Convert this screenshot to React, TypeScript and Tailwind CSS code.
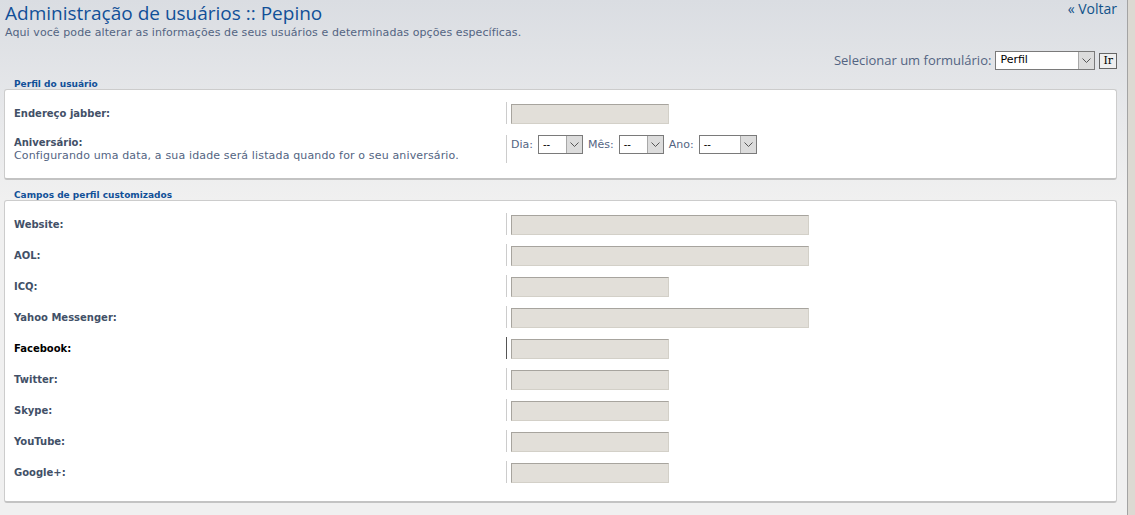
import React from "react";

const Chevron = () => (
  <svg width="9" height="6" viewBox="0 0 9 6" className="block">
    <path d="M0.5 0.5 L4.5 4.5 L8.5 0.5" fill="none" stroke="#555" strokeWidth="1" />
  </svg>
);

function FakeSelect({ width, value, text = "text-[10px]" }: { width: number; value: string; text?: string }) {
  return (
    <div
      className="flex h-[19px] border border-[#7a7a7a] bg-white box-border shrink-0"
      style={{ width }}
    >
      <div className={`flex-1 flex items-center pl-[4px] ${text} text-black`}>{value}</div>
      <div className="w-[16px] bg-[#dcdcdc] border-l border-[#a8a8a8] flex items-center justify-center">
        <Chevron />
      </div>
    </div>
  );
}

function Input({ long }: { long?: boolean }) {
  return (
    <div
      className={`h-[20px] bg-[#e2dfd9] border-t border-l border-[#a7a49e] border-b border-r border-b-[#d3d0c8] border-r-[#d3d0c8] ${
        long ? "w-[298px]" : "w-[158px]"
      }`}
    />
  );
}

function Row({ label, long, active }: { label: string; long?: boolean; active?: boolean }) {
  return (
    <div className="flex h-[22px]">
      <div className={`w-[501px] pl-[9px] flex items-center text-[10px] font-bold ${active ? "text-black" : "text-[#425067]"}`}>
        {label}
      </div>
      <div className={`border-l ${active ? "border-[#555]" : "border-[#cccccc]"} pl-[4px] pt-[2px]`}>
        <Input long={long} />
      </div>
    </div>
  );
}

function Legend({ children, mt }: { children: React.ReactNode; mt: string }) {
  return (
    <div className={`pl-[10px] h-[13px] pt-[3px] text-[9px] font-bold text-[#115098] leading-[10px] ${mt}`}>
      {children}
    </div>
  );
}

export default function App() {
  return (
    <div
      className="flex w-[1135px] h-[515px] overflow-hidden"
      style={{ fontFamily: '"DejaVu Sans", Verdana, sans-serif' }}
    >
      <div className="flex-1 bg-[linear-gradient(to_bottom,#dadde2_0px,#e8e9eb_120px,#f0f0f0_200px,#f0f0f0_100%)] pr-[10px]">
        <div className="flex justify-between">
          <div className="pl-[5px]">
            <h1
              className="text-[19px] leading-[24px] text-[#115098] mt-[1px]"
              style={{ fontFamily: '"Open Sans", "Trebuchet MS", sans-serif' }}
            >
              Administração de usuários :: Pepino
            </h1>
            <p className="text-[11px] leading-[14px] text-[#536482] mt-[1px] tracking-[0.09px]">
              Aqui você pode alterar as informações de seus usuários e determinadas opções específicas.
            </p>
          </div>
          <a
            className="text-[14px] leading-[18px] text-[#105289]"
            style={{ fontFamily: '"Open Sans", sans-serif' }}
          >
            « Voltar
          </a>
        </div>

        <div className="flex justify-end items-center mt-[11px] gap-[4px] h-[19px]">
          <span className="text-[13px] leading-[19px] text-[#536482]" style={{ fontFamily: '"Open Sans", sans-serif' }}>
            Selecionar um formulário:
          </span>
          <FakeSelect width={100} value="Perfil" text="text-[11px]" />
          <div
            className="h-[16px] px-[3px] border border-[#666] bg-[#efefef] text-[11px] leading-[14px] text-black"
            style={{ fontFamily: '"DejaVu Serif", serif' }}
          >
            Ir
          </div>
        </div>

        <div className="ml-[4px]">
          <Legend mt="mt-[6px]">Perfil do usuário</Legend>
          <div className="bg-white border border-[#cccccc] border-b-[#c3c3c3] border-b-2 rounded-[3px] pt-[12px] pb-[15px]">
            <div className="flex h-[22px]">
              <div className="w-[501px] pl-[9px] flex items-center text-[10px] font-bold text-[#425067]">
                Endereço jabber:
              </div>
              <div className="border-l border-[#cccccc] pl-[4px] pt-[2px]">
                <Input />
              </div>
            </div>
            <div className="flex h-[28px] mt-[11px]">
              <div className="w-[501px] pl-[9px] leading-[13px] pt-[1px]">
                <div className="text-[10px] font-bold text-[#425067]">Aniversário:</div>
                <div className="text-[11px] text-[#536482] tracking-[0.15px]">
                  Configurando uma data, a sua idade será listada quando for o seu aniversário.
                </div>
              </div>
              <div className="border-l border-[#cccccc] pl-[4px] flex items-start gap-[5px] text-[11px] text-[#536482]">
                <span className="leading-[19px]">Dia:</span>
                <FakeSelect width={45} value="--" />
                <span className="leading-[19px]">Mês:</span>
                <FakeSelect width={45} value="--" />
                <span className="leading-[19px]">Ano:</span>
                <FakeSelect width={58} value="--" />
              </div>
            </div>
          </div>

          <Legend mt="mt-[7px]">Campos de perfil customizados</Legend>
          <div className="bg-white border border-[#cccccc] border-b-[#c3c3c3] border-b-2 rounded-[3px] pt-[12px] pb-[18px] flex flex-col gap-[9px]">
            <Row label="Website:" long />
            <Row label="AOL:" long />
            <Row label="ICQ:" />
            <Row label="Yahoo Messenger:" long />
            <Row label="Facebook:" active />
            <Row label="Twitter:" />
            <Row label="Skype:" />
            <Row label="YouTube:" />
            <Row label="Google+:" />
          </div>
        </div>
      </div>
      <div className="w-[8px] bg-[#dcd9d2] border-l border-[#a3a3a3]" />
    </div>
  );
}
